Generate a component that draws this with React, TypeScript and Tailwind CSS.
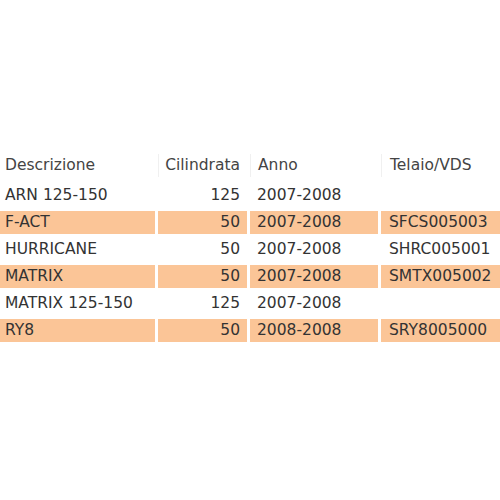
const rows = [
  { desc: 'ARN 125-150', cc: '125', anno: '2007-2008', vds: '', hl: false },
  { desc: 'F-ACT', cc: '50', anno: '2007-2008', vds: 'SFCS005003', hl: true },
  { desc: 'HURRICANE', cc: '50', anno: '2007-2008', vds: 'SHRC005001', hl: false },
  { desc: 'MATRIX', cc: '50', anno: '2007-2008', vds: 'SMTX005002', hl: true },
  { desc: 'MATRIX 125-150', cc: '125', anno: '2007-2008', vds: '', hl: false },
  { desc: 'RY8', cc: '50', anno: '2008-2008', vds: 'SRY8005000', hl: true },
];

export default function App() {
  return (
    <div className="h-[500px] w-[500px] overflow-hidden bg-white pt-[154px] text-[15.5px] leading-[23px] text-[#333]" style={{ fontFamily: '"DejaVu Sans", Verdana, sans-serif' }}>
      <div className="grid grid-cols-[155px_89px_128px_1fr] gap-x-[3px] gap-y-[4px]">
        <div className="mb-[3px] pl-[5px] text-[#444]">Descrizione</div>
        <div className="mb-[3px] border-l border-[#f0f0f0] pr-[7px] text-right text-[#444]">Cilindrata</div>
        <div className="mb-[3px] border-l border-[#f0f0f0] pl-[7px] text-[#444]">Anno</div>
        <div className="mb-[3px] border-l border-[#f0f0f0] pl-[8px] text-[#444]">Telaio/VDS</div>
        {rows.map((r, i) => {
          const bg = r.hl ? 'bg-[#fbc597]' : 'bg-white';
          return [
            <div key={`a${i}`} className={`${bg} pl-[5px]`}>{r.desc}</div>,
            <div key={`b${i}`} className={`${bg} pr-[7px] text-right`}>{r.cc}</div>,
            <div key={`c${i}`} className={`${bg} pl-[7px]`}>{r.anno}</div>,
            <div key={`d${i}`} className={`${bg} pl-[8px]`}>{r.vds}</div>,
          ];
        })}
      </div>
    </div>
  );
}
